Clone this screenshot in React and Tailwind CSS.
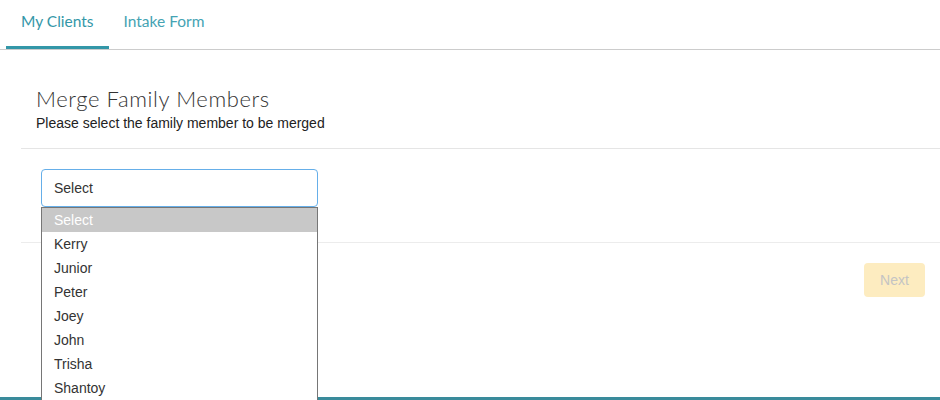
import React from 'react';

const options = ['Select', 'Kerry', 'Junior', 'Peter', 'Joey', 'John', 'Trisha', 'Shantoy'];

export default function App() {
  return (
    <div className="w-[940px] h-[400px] bg-white overflow-hidden flex flex-col">
      {/* Tabs */}
      <div className="h-[50px] flex pl-[6px] border-b border-[#cccccc] shrink-0 font-['Lato',sans-serif] text-[15.5px]">
        <div className="px-[15px] flex items-center border-b-[3px] border-[#3397a8] h-[49px] pb-[3px] text-[#3497a8]">
          My Clients
        </div>
        <div className="px-[15px] flex items-center border-b-[3px] border-transparent h-[49px] pb-[3px] text-[#45a3b3]">
          Intake Form
        </div>
      </div>

      {/* Panel */}
      <div className="flex-1 pl-[21px] flex flex-col border-b-[3px] border-[#3a8b9b]">
        <div className="pl-[15px] pt-[36px] pb-[17px] border-b border-[#e5e5e5]">
          <h2 className="text-[22px] leading-[26px] text-[#333] font-light font-['Lato',sans-serif] tracking-[0.6px]">Merge Family Members</h2>
          <p className="mt-[3px] text-[14px] leading-[16px] text-[#222] font-['Liberation_Sans',sans-serif]">Please select the family member to be merged</p>
        </div>

        <div className="pt-[20px] pb-[35px] pl-[20px] border-b border-[#ececec]">
          <div className="relative w-[277px]">
            <div className="h-[38px] border border-[#66afe9] rounded-[4px] flex items-center pl-[12px] text-[14px] text-[#333] font-['Liberation_Sans',sans-serif]">
              Select
            </div>
            <ul className="absolute top-[38px] left-0 w-[277px] bg-white border border-[#767676] z-10 font-['Liberation_Sans',sans-serif] text-[14px]">
              {options.map((o, i) => (
                <li
                  key={o}
                  className={`h-[24px] leading-[24px] pl-[12px] ${i === 0 ? 'bg-[#c8c8c8] text-white' : 'text-[#333]'}`}
                >
                  {o}
                </li>
              ))}
            </ul>
          </div>
        </div>

        <div className="flex justify-end pr-[15px] pt-[20px]">
          <button className="w-[61px] h-[34px] rounded-[4px] bg-[#fdecc0] text-[#c4c4c4] text-[14px] font-['Liberation_Sans',sans-serif]">
            Next
          </button>
        </div>
      </div>
    </div>
  );
}
